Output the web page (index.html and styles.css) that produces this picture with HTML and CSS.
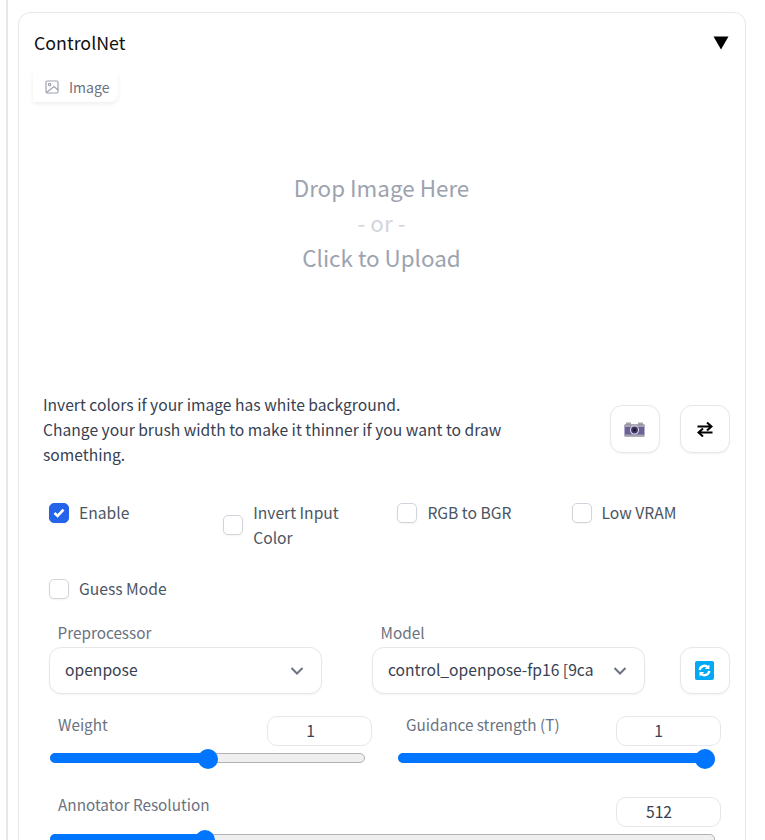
FILE: index.html
```html
<!DOCTYPE html>
<html lang="en">
<head>
<meta charset="utf-8">
<title>ControlNet</title>
<link rel="stylesheet" href="styles.css">
</head>
<body>
<div class="page">
  <section class="card">
    <header class="card-head">
      <span class="card-title">ControlNet</span>
      <svg class="caret" width="16" height="14" viewBox="0 0 16 14"><path d="M0.5 0.5H15.5L8 13.5Z" fill="#000"/></svg>
    </header>
    <div class="tab-row">
      <div class="tab">
        <svg width="14" height="14" viewBox="0 0 14 14" fill="none" stroke="#9ca3af" stroke-width="1.2"><rect x="1" y="1" width="12" height="12" rx="1.2"/><circle cx="4.6" cy="4.6" r="1.2"/><path d="M1.5 12.5L9 6.5L13 10"/></svg>
        <span>Image</span>
      </div>
    </div>
    <div class="drop">
      <div>Drop Image Here</div>
      <div class="drop-or">- or -</div>
      <div>Click to Upload</div>
    </div>
    <div class="help-row">
      <p class="help">Invert colors if your image has white background.<br>Change your brush width to make it thinner if you want to draw something.</p>
      <div class="tool-buttons">
        <button class="icon-btn">
          <svg class="camera" width="21" height="15" viewBox="0 0 21 15"><rect x="2" y="0.5" width="5" height="3" fill="#a5a3ab"/><rect x="14" y="0.5" width="5" height="3" fill="#a5a3ab"/><rect x="0.5" y="2.5" width="20" height="12" rx="1" fill="#6d5f99"/><rect x="0.5" y="2.5" width="20" height="2.5" fill="#a5a3ab"/><rect x="0.5" y="12.5" width="20" height="2" fill="#a5a3ab"/><circle cx="10.5" cy="8" r="4.6" fill="#d9d6e6"/><circle cx="10.5" cy="8" r="3.4" fill="#3f3560"/><circle cx="10.5" cy="8" r="1.5" fill="#1d1738"/></svg>
        </button>
        <button class="icon-btn">
          <svg width="16" height="15" viewBox="0 0 16 15" fill="none" stroke="#000" stroke-width="2"><path d="M0.5 5H14M10 1L14.5 5L10 9" transform="translate(0 -0.5)"/><path d="M15.5 10.5H2M6 6.5L1.5 10.5L6 14.5"/></svg>
        </button>
      </div>
    </div>
    <div class="checks">
      <label class="check"><span class="box on"><svg width="12" height="10" viewBox="0 0 12 10" fill="none" stroke="#fff" stroke-width="2.6"><path d="M1.5 5L4.6 8L10.5 1.7"/></svg></span><span>Enable</span></label>
      <label class="check mid"><span class="box"></span><span>Invert Input Color</span></label>
      <label class="check"><span class="box"></span><span>RGB to BGR</span></label>
      <label class="check"><span class="box"></span><span>Low VRAM</span></label>
      <label class="check guess"><span class="box"></span><span>Guess Mode</span></label>
    </div>
    <div class="selects">
      <div class="field">
        <div class="field-label">Preprocessor</div>
        <div class="select"><span class="select-text">openpose</span><svg width="14" height="8" viewBox="0 0 14 8" fill="none" stroke="#6b7280" stroke-width="2"><path d="M1.5 1L7 6.5L12.5 1"/></svg></div>
      </div>
      <div class="field">
        <div class="field-label">Model</div>
        <div class="select"><span class="select-text">control_openpose-fp16 [9ca</span><svg width="14" height="8" viewBox="0 0 14 8" fill="none" stroke="#6b7280" stroke-width="2"><path d="M1.5 1L7 6.5L12.5 1"/></svg></div>
      </div>
      <button class="icon-btn refresh">
        <svg class="refresh-icon" width="19" height="19" viewBox="0 0 20 20"><rect width="20" height="20" rx="2" fill="#03a9f4"/><g fill="none" stroke="#fff" stroke-width="2.4"><path d="M5 9.5A5 5 0 0 1 13.5 6.5"/><path d="M15 10.5A5 5 0 0 1 6.5 13.5"/></g><path d="M15.2 3.6V8.4H10.4Z" fill="#fff"/><path d="M4.8 16.4V11.6H9.6Z" fill="#fff"/></svg>
      </button>
    </div>
    <div class="sliders">
      <div class="slider">
        <div class="slider-top"><span class="field-label">Weight</span><span class="num">1</span></div>
        <div class="track"><div class="fill" style="width:50%"></div><div class="thumb" style="left:50.2%"></div></div>
      </div>
      <div class="slider">
        <div class="slider-top"><span class="field-label">Guidance strength (T)</span><span class="num">1</span></div>
        <div class="track"><div class="fill" style="width:97%"></div><div class="thumb" style="left:97.1%"></div></div>
      </div>
    </div>
    <div class="slider wide">
      <div class="slider-top"><span class="field-label">Annotator Resolution</span><span class="num">512</span></div>
      <div class="track"><div class="fill" style="width:23%"></div><div class="thumb" style="left:23.3%"></div></div>
    </div>
  </section>
</div>
</body>
</html>
```

FILE: styles.css
```css
* { box-sizing: border-box; }
html, body { margin: 0; height: 840px; overflow: hidden; background: #fff; }
body { font-family: "Noto Sans CJK SC", "Noto Sans", sans-serif; font-size: 15.65px; color: #374151; }
.page { margin-left: 6px; height: 840px; border-left: 2px solid #e5e7eb; padding: 12px 0 0 10px; width: 741px; }
.card { width: 728px; height: 900px; border: 1px solid #e5e7eb; border-radius: 12px; padding: 0 15px 0 14px; }
.card-head { display: flex; justify-content: space-between; align-items: center; height: 60px; padding-left: 1px; }
.card-title { font-size: 17.8px; line-height: 24px; margin-top: -2px; color: #111; }
.caret { margin: 0 1px 0 0; }
.tab-row { display: flex; height: 30px; margin-top: -1px; }
.tab { display: flex; align-items: center; gap: 10px; width: 85px; height: 30px; padding-left: 12px; background: #fff; border-radius: 0 0 8px 0; box-shadow: 0 2px 4px rgba(0,0,0,.07); font-size: 14px; line-height: 20px; color: #6b7280; }
.drop { height: 303px; display: flex; flex-direction: column; align-items: center; padding-top: 68px; font-size: 22.4px; line-height: 35px; color: #9ca3af; }
.drop-or { color: #d1d5db; }
.help-row { display: flex; justify-content: space-between; padding-left: 10px; }
.help { margin: -13px 0 0; width: 480px; line-height: 25px; color: #374151; }
.tool-buttons { display: flex; gap: 20px; }
.icon-btn { display: flex; align-items: center; justify-content: center; width: 50px; height: 48px; padding: 0; background: #fff; border: 1px solid #e5e7eb; border-radius: 12px; box-shadow: 0 1px 2px rgba(0,0,0,.05); }
.camera { margin-left: -1px; }
.refresh-icon { margin-left: -1px; }
.checks { display: grid; grid-template-columns: repeat(4, 174.2px); margin: 33px 0 0 16px; row-gap: 26px; }
.check { display: flex; align-items: center; gap: 10px; line-height: 25px; color: #4b5563; height: 25px; }
.check.mid { height: 50px; padding-right: 20px; }
.check.mid + .check, .check.mid + .check + .check { height: 25px; }
.box { flex: none; display: flex; align-items: center; justify-content: center; width: 20px; height: 20px; border: 1px solid #d1d5db; border-radius: 5px; background: #fff; box-shadow: 0 1px 2px rgba(0,0,0,.05); }
.box.on { background: #2563eb; border-color: #2563eb; }
.selects { display: flex; align-items: flex-end; margin: 20px 0 0 16px; }
.field { width: 273px; margin-right: 50px; }
.field + .field { margin-right: 35px; }
.field-label { display: block; padding-left: 8.5px; font-size: 15.3px; line-height: 22px; color: #6b7280; }
.select { display: flex; align-items: center; justify-content: space-between; height: 47px; margin-top: 4px; padding: 0 17px 0 15px; border: 1px solid #e5e7eb; border-radius: 12px; background: #fff; box-shadow: 0 1px 2px rgba(0,0,0,.05); }
.select-text { white-space: nowrap; overflow: hidden; width: 206px; margin-top: -2px; color: #374151; line-height: 22px; }
.refresh { height: 47px; }
.sliders { display: flex; gap: 33px; margin: 22px 0 0 17px; }
.slider { width: 315px; }
.slider + .slider { width: 317px; }
.slider-top { display: flex; justify-content: space-between; align-items: flex-start; height: 37px; }
.slider-top .field-label { padding-left: 8px; margin-top: -3px; }
.slider + .slider .num { margin-right: -6px; padding-right: 20px; }
.slider:first-child .num { margin-right: -7px; }
.num { width: 105px; height: 30px; padding-right: 18px; border: 1px solid #e5e7eb; border-radius: 10px; text-align: center; line-height: 27px; color: #374151; background: #fff; }
.track { position: relative; height: 10px; background: #efefef; border: 1px solid #b2b2b2; border-radius: 5px; }
.fill { position: absolute; left: -1px; top: -1px; height: 10px; background: #0075ff; border-radius: 5px 0 0 5px; }
.thumb { position: absolute; top: -5px; width: 20px; height: 20px; margin-left: -10px; border-radius: 50%; background: #0075ff; }
.slider.wide { width: 665px; margin: 34px 0 0 17px; }
.slider.wide .field-label { margin-top: -4px; }
.slider.wide .num { margin-right: -6px; padding-right: 19px; }
```
